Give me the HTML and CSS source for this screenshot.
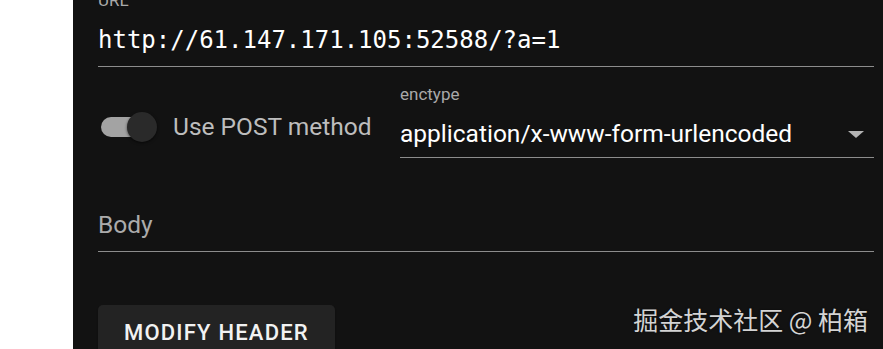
FILE: index.html
```html
<!DOCTYPE html>
<html lang="en">
<head>
<meta charset="utf-8">
<title>Request form</title>
<link rel="stylesheet" href="styles.css">
</head>
<body>
<div class="page">
  <div class="side"></div>
  <main class="panel">
    <div class="content">
      <div class="field url-field">
        <div class="field-label">URL</div>
        <div class="url-value">http://61.147.171.105:52588/?a=1</div>
      </div>
      <div class="row">
        <div class="switch-group">
          <span class="switch">
            <span class="track"></span>
            <span class="thumb"></span>
          </span>
          <span class="switch-label">Use POST method</span>
        </div>
        <div class="field select-field">
          <div class="field-label">enctype</div>
          <div class="select">
            <span class="select-value">application/x-www-form-urlencoded</span>
            <span class="arrow"></span>
          </div>
        </div>
      </div>
      <div class="field body-field">
        <div class="placeholder">Body</div>
      </div>
      <button class="btn" type="button">Modify Header</button>
    </div>
  </main>
</div>
<div class="watermark">掘金技术社区 @ 柏箱</div>
</body>
</html>
```

FILE: styles.css
```css
html, body {
  margin: 0;
  padding: 0;
  height: 100%;
  overflow: hidden;
  background: #ffffff;
  font-family: Roboto, "Noto Sans", sans-serif;
}

.page {
  display: flex;
  height: 349px;
}

.side {
  width: 73px;
  flex: none;
  background: #ffffff;
}

.panel {
  flex: 1;
  background: #121212;
  padding: 0 9px 0 25px;
  overflow: hidden;
}

.content {
  margin-top: -10px;
  display: flex;
  flex-direction: column;
  align-items: stretch;
}

.field {
  border-bottom: 1px solid #8c8c8c;
}

.field-label {
  font-size: 17px;
  line-height: 20px;
  color: #a9a9a9;
}

.url-field {
  padding-bottom: 10px;
}

.url-value {
  margin-top: 14px;
  font-family: "DejaVu Sans Mono", "Liberation Mono", monospace;
  font-size: 24px;
  line-height: 32px;
  color: #ffffff;
  letter-spacing: 0;
}

.row {
  display: grid;
  grid-template-columns: 302px 1fr;
  margin-top: 17px;
}

.switch-group {
  display: flex;
  align-items: center;
  align-self: start;
  margin-top: 28px;
  margin-left: 3px;
  gap: 15px;
}

.switch {
  position: relative;
  width: 57px;
  height: 30px;
  flex: none;
}

.track {
  position: absolute;
  left: 0;
  top: 5px;
  width: 49px;
  height: 20px;
  border-radius: 10px;
  background: #a3a3a3;
}

.thumb {
  position: absolute;
  left: 26px;
  top: 0;
  width: 30px;
  height: 30px;
  border-radius: 50%;
  background: #2a2a2a;
  box-shadow: 0 1px 3px rgba(0, 0, 0, 0.6);
}

.switch-label {
  font-size: 24.5px;
  line-height: 28px;
  color: #bdbdbd;
}

.select-field {
  padding-bottom: 9px;
}

.select {
  margin-top: 16px;
  display: flex;
  align-items: center;
  justify-content: space-between;
  padding-right: 10px;
}

.select-value {
  font-size: 24.5px;
  line-height: 28px;
  color: #ffffff;
}

.arrow {
  width: 0;
  height: 0;
  border-left: 8px solid transparent;
  border-right: 8px solid transparent;
  border-top: 7px solid #b3b3b3;
  margin-top: 1px;
}

.body-field {
  margin-top: 53px;
  padding-bottom: 12px;
}

.placeholder {
  font-size: 24.5px;
  line-height: 28px;
  color: #ababab;
}

.btn {
  align-self: flex-start;
  margin-top: 53px;
  padding: 12px 26px 8px;
  border: none;
  border-radius: 5px;
  background: #232323;
  color: #f2f2f2;
  font-family: Roboto, "Noto Sans", sans-serif;
  font-weight: 500;
  font-size: 22px;
  line-height: 32px;
  letter-spacing: 1.2px;
  text-transform: uppercase;
  box-shadow: 0 2px 2px rgba(0, 0, 0, 0.4);
}

.watermark {
  position: absolute;
  right: 15px;
  bottom: 17px;
  font-family: "Noto Sans CJK SC", sans-serif;
  font-size: 25px;
  line-height: 25px;
  color: #d4d4d4;
  text-shadow: 0 0 2px rgba(0, 0, 0, 0.5);
  white-space: nowrap;
}
```
